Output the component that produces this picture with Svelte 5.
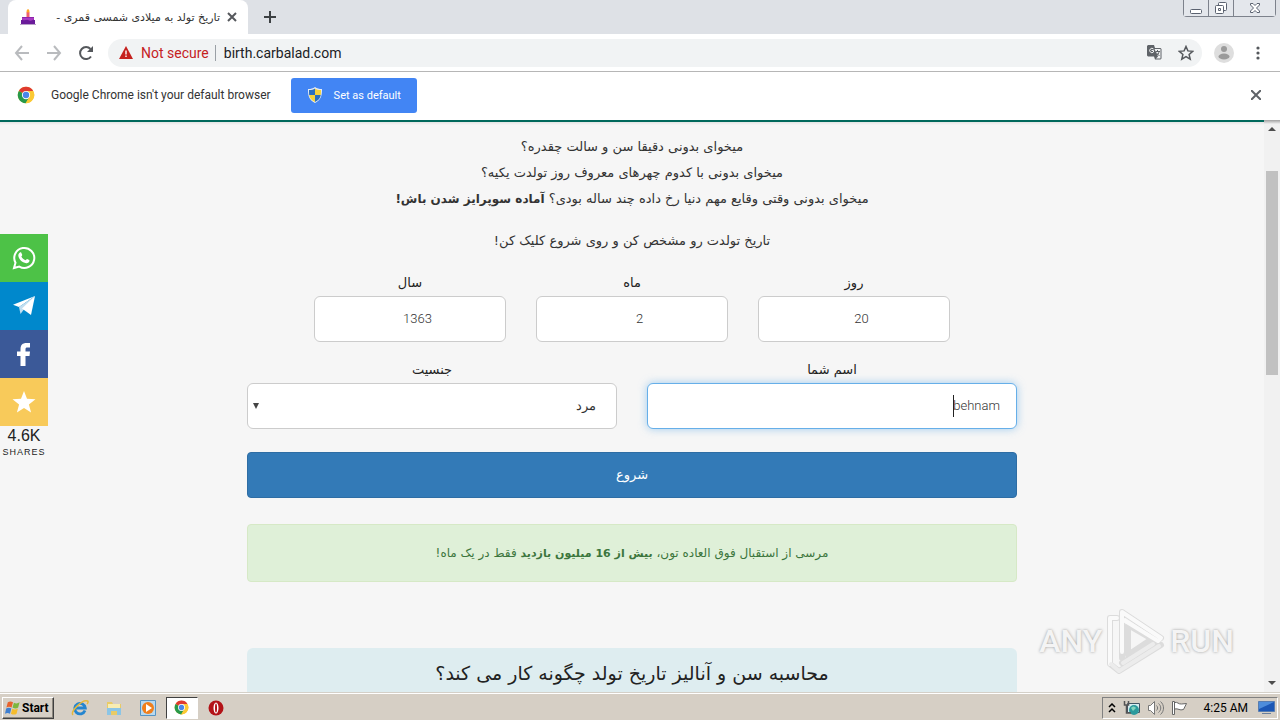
<script>
  let day = $state(20);
  let month = $state(2);
  let year = $state(1363);
  let name = $state('behnam');
  let gender = $state('male');
</script>

{#snippet chromeLogo(size)}
  <svg width={size} height={size} viewBox="0 0 48 48" aria-hidden="true">
    <circle cx="24" cy="24" r="22" fill="#fbc934" />
    <path d="M24 24 4.900 13a22 22 0 0 1 38.200 0z" fill="#df3a2f" />
    <path d="M4.900 13A22 22 0 0 0 23 46l10-17-9-5z" fill="#27994a" />
    <path d="M24 13h19.100A22 22 0 0 1 23 46l10.500-17z" fill="#fbc934" />
    <circle cx="24" cy="24" r="11" fill="#fff" />
    <circle cx="24" cy="24" r="8.500" fill="#4a86e8" />
  </svg>
{/snippet}

<div class="desktop">
  <header class="tab-strip">
    <div class="tab">
      <svg class="favicon" width="16" height="16" viewBox="0 0 16 16" aria-hidden="true">
        <path d="M6.500 3h3v6h-3z" fill="#f0616d" />
        <path d="M8 0c2 1.500 2 3.500 0 3.500S6 1.500 8 0z" fill="#ffa726" />
        <path d="M2 8h12v4H2z" fill="#8e24aa" />
        <path d="M1 11h14v4H1z" fill="#6a1b9a" />
        <path d="M2 10c2 3 4 0 6 1s4 1 6-1V9H2z" fill="#a93bc4" />
        <path d="M0 15h16v1H0z" fill="#b8a0c8" />
      </svg>
      <span class="tab-title" dir="rtl">تاریخ تولد به میلادی شمسی قمری -</span>
      <button class="icon-btn" aria-label="Close tab">
        <svg width="10" height="10" viewBox="0 0 10 10"><path d="m1 1 8 8M9 1 1 9" stroke="#55585c" stroke-width="2" /></svg>
      </button>
    </div>
    <button class="icon-btn new-tab" aria-label="New tab">
      <svg width="12" height="12" viewBox="0 0 12 12"><path d="M6 0v12M0 6h12" stroke="#3c4043" stroke-width="2" /></svg>
    </button>
    <div class="window-controls">
      <button aria-label="Minimize">
        <svg width="14" height="14" viewBox="0 0 14 14"><rect x="1.500" y="8.500" width="11" height="4" rx="1" fill="#fff" stroke="#5b6270" /></svg>
      </button>
      <button aria-label="Restore">
        <svg width="14" height="14" viewBox="0 0 14 14" fill="#fff" stroke="#5b6270"><rect x="4.500" y="1.500" width="8" height="8" rx="1" /><rect x="1.500" y="4.500" width="8" height="8" rx="1" /><path d="M4.500 7.500h2v2h-2z" /></svg>
      </button>
      <button class="wide" aria-label="Close window">
        <svg width="14" height="14" viewBox="0 0 14 14"><path d="M2.500 2.500h2.500l2 2 2-2h2.500v1.500L8.500 7l3 3v1.500H9l-2-2-2 2H2.500V10l3-3-3-3z" fill="#fff" stroke="#5b6270" /></svg>
      </button>
    </div>
  </header>

  <nav class="toolbar" aria-label="Browser">
    <button class="icon-btn" aria-label="Back">
      <svg width="16" height="16" viewBox="0 0 16 16" fill="none" stroke="#b9bbbe" stroke-width="2"><path d="M15 8H2M8 1 2 8l6 7" /></svg>
    </button>
    <button class="icon-btn" aria-label="Forward">
      <svg width="16" height="16" viewBox="0 0 16 16" fill="none" stroke="#b9bbbe" stroke-width="2"><path d="M1 8h13M8 1l6 7-6 7" /></svg>
    </button>
    <button class="icon-btn" aria-label="Reload">
      <svg width="16" height="16" viewBox="0 0 16 16"><path d="M13 11.500A6 6 0 1 1 12.500 4" fill="none" stroke="#55585c" stroke-width="2" /><path d="M15 1v6H9z" fill="#55585c" /></svg>
    </button>
    <div class="omnibox">
      <svg width="14" height="13" viewBox="0 0 14 13" aria-hidden="true"><path d="M7 0l7 13H0z" fill="#c5221f" /><path d="M6.300 4.500h1.400v4H6.300zM6.300 9.500h1.400V11H6.300z" fill="#fff" /></svg>
      <span class="not-secure">Not secure</span>
      <input class="url" aria-label="Address" value="birth.carbalad.com" />
      <button class="icon-btn" aria-label="Translate this page">
        <svg width="15" height="15" viewBox="0 0 15 15">
          <path d="M1 0h6l1 3h5.500l1 1v9.500l-1 1H8l-1-3H1l-1-1V1z" fill="#5f6368" />
          <path d="M7.500 4h6v9.500H9l2-2z" fill="#f1f3f4" />
          <path d="M6.500 4A2.200 2.200 0 1 0 6.500 7V5.500H4.500" fill="none" stroke="#f1f3f4" />
          <path d="M8.500 6.500H13M10.500 5v1.500M12 6.500c0 2-1.500 3.500-3 4M9 7.500l3.500 3.500" fill="none" stroke="#5f6368" />
        </svg>
      </button>
      <button class="icon-btn" aria-label="Bookmark this page">
        <svg width="16" height="16" viewBox="0 0 16 16"><path d="m8 1.500 1.900 4.400 4.800.4-3.600 3.200 1.100 4.700L8 11.700l-4.200 2.500 1.100-4.700L1.300 6.300l4.800-.4z" fill="none" stroke="#55585c" stroke-width="1.500" /></svg>
      </button>
    </div>
    <button class="icon-btn" aria-label="Profile">
      <svg width="20" height="20" viewBox="0 0 20 20"><circle cx="10" cy="10" r="10" fill="#dedede" /><circle cx="10" cy="6" r="3" fill="#9b9b9b" /><ellipse cx="10" cy="13.500" rx="5.500" ry="3" fill="#9b9b9b" /></svg>
    </button>
    <button class="icon-btn" aria-label="Menu">
      <svg width="16" height="16" viewBox="0 0 16 16" fill="#55585c"><circle cx="8" cy="3" r="1.600" /><circle cx="8" cy="8" r="1.600" /><circle cx="8" cy="13" r="1.600" /></svg>
    </button>
  </nav>

  <div class="infobar">
    {@render chromeLogo(18)}
    <span>Google Chrome isn't your default browser</span>
    <button class="default-btn">
      <svg width="14" height="16" viewBox="0 0 14 16" aria-hidden="true">
        <path d="M7 0c2 1.500 4 2 7 2 0 7-1 11-7 14C1 13 0 9 0 2c3 0 5-.5 7-2z" fill="#e8eef5" />
        <path d="M7 1.500V8H1.200C1 6 1 5 1 3c2.500 0 4.500-.5 6-1.500zM7 8h5.800c-.5 3-2 5-5.800 7z" fill="#2a6fc0" />
        <path d="M7 1.500V8h5.800c.2-2 .2-3 .2-5-2.500 0-4.500-.5-6-1.500zM7 8H1.200c.5 3 2 5 5.800 7z" fill="#f5d23c" />
      </svg>
      Set as default
    </button>
    <button class="icon-btn dismiss" aria-label="Dismiss">
      <svg width="10" height="10" viewBox="0 0 10 10"><path d="m0 0 10 10M10 0 0 10" stroke="#5f6368" stroke-width="2" /></svg>
    </button>
  </div>

  <div class="viewport">
    <main class="page" dir="rtl" lang="fa">
      <div class="container">
        <p>
          میخوای بدونی دقیقا سن و سالت چقدره؟<br />
          میخوای بدونی با کدوم چهرهای معروف روز تولدت یکیه؟<br />
          میخوای بدونی وقتی وقایع مهم دنیا رخ داده چند ساله بودی؟ <strong>آماده سوپرایز شدن باش!</strong>
        </p>
        <p>تاریخ تولدت رو مشخص کن و روی شروع کلیک کن!</p>

        <form onsubmit={(e) => e.preventDefault()}>
          <div class="row birth">
            <div class="field">
              <label for="day">روز</label>
              <input id="day" type="number" bind:value={day} />
            </div>
            <div class="field">
              <label for="month">ماه</label>
              <input id="month" type="number" bind:value={month} />
            </div>
            <div class="field">
              <label for="year">سال</label>
              <input id="year" type="number" bind:value={year} />
            </div>
          </div>
          <div class="row">
            <div class="field">
              <label for="name">اسم شما</label>
              <div class="name-box">
                <input id="name" class="focused" type="text" bind:value={name} />
                <span class="caret"></span>
              </div>
            </div>
            <div class="field">
              <label for="gender">جنسیت</label>
              <div class="select-box">
                <select id="gender" bind:value={gender}>
                  <option value="male">مرد</option>
                  <option value="female">زن</option>
                </select>
                <svg class="arrow" width="6" height="6" viewBox="0 0 6 6" aria-hidden="true"><path d="M0 0h6L3 6z" fill="#444" /></svg>
              </div>
            </div>
          </div>
          <button class="start-search" type="submit">شروع</button>
        </form>

        <div class="alert">
          مرسی از استقبال فوق العاده تون، <strong>بیش از 16 میلیون بازدید</strong> فقط در یک ماه!
        </div>

        <section class="about">
          <h2>محاسبه سن و آنالیز تاریخ تولد چگونه کار می کند؟</h2>
        </section>
      </div>
    </main>

    <div class="scrollbar">
      <svg width="8" height="4" viewBox="0 0 8 4"><path d="M0 4h8L4 0z" fill="#4d4d4d" /></svg>
      <div class="track"><div class="thumb"></div></div>
      <svg width="8" height="4" viewBox="0 0 8 4"><path d="M0 0h8L4 4z" fill="#4d4d4d" /></svg>
    </div>

    <aside class="share">
      <a class="whatsapp" href="#whatsapp" aria-label="WhatsApp">
        <svg width="24" height="24" viewBox="0 0 24 24">
          <path d="M2 22l1.500-5.300A10 10 0 1 1 7.300 20.600z" fill="none" stroke="#fff" stroke-width="2" />
          <path d="M8 6.500c.5-.3 1-.2 1.300.3l.9 2c.1.500-.8 1.400-.8 1.700.7 1.700 2.300 3 4 3.700.5 0 1.200-1.400 1.700-1.300l2.100 1c.5.300.3 1.300 0 1.900-.5 1-1.900 1.600-3 1.400C10 16.500 6.500 13 6.300 9.500c0-1.200.8-2.500 1.700-3z" fill="#fff" />
        </svg>
      </a>
      <a class="telegram" href="#telegram" aria-label="Telegram">
        <svg width="24" height="22" viewBox="0 0 24 22">
          <path d="M23 1 1 9.700l6 2.300z" fill="#fff" />
          <path d="M23 1 7 12l1.500 7 3-4z" fill="#c2dff0" />
          <path d="M23 1 10 13.500l9 6.500z" fill="#fff" />
        </svg>
      </a>
      <a class="facebook" href="#facebook" aria-label="Facebook">
        <svg width="14" height="23" viewBox="0 0 14 23"><path d="M3.500 23V13H0V8.500h3.500V6c0-4 2-6 6-6H13v4.500h-2.500c-1.700 0-2 .6-2 2v2H13l-.5 4.500h-4v10z" fill="#fff" /></svg>
      </a>
      <a class="favorites" href="#favorites" aria-label="Favorites">
        <svg width="24" height="22" viewBox="0 0 24 22"><path d="m12 0 3 7.800 8.500.4-6.600 5.200 2.200 8.100L12 17l-7.100 4.500 2.200-8.100L.5 8.200 9 7.800z" fill="#fff" /></svg>
      </a>
      <span class="count">4.6K</span>
      <span class="caption">SHARES</span>
    </aside>

    <div class="watermark">
      <span>ANY</span>
      <svg width="60" height="66" viewBox="0 0 60 66" fill="none" stroke-linejoin="round" stroke-linecap="round" aria-hidden="true">
        <g stroke="#dcdcdc" stroke-width="6"><path d="M16 50V4l39 26-39 25M11 10H4v46l9 7 42-26" /><path d="M22 17v30l24-16z" /></g>
        <g stroke="#fafafa" stroke-width="4"><path d="M16 44V4l39 26-3 3-36-22" /><path d="M11 10H4v46" /></g>
        <path d="M5 56l8 7 40-25M17 55l30-19" stroke="#ececec" stroke-width="4" />
      </svg>
      <span>RUN</span>
    </div>
  </div>

  <footer class="taskbar">
    <button class="start">
      <svg width="16" height="16" viewBox="0 0 17 16" aria-hidden="true">
        <path d="M3 2c2-1.500 4-1 5.500 0L7 7.500c-2-1-3.500-1-5.500 0z" fill="#e8622c" />
        <path d="M9.500 2.500c2 1 4 1 6-.5L14 7.500c-2 1.500-4 1-6 0z" fill="#7db63c" />
        <path d="M1.200 8.500c2-1.200 4-1 5.500 0L5.300 14c-1.800-1-3.300-1-5.300 0z" fill="#3f7fd0" />
        <path d="M7.700 8.800c2 1 4 1 6-.3L12.300 14c-2 1.500-4 1.200-6 0z" fill="#f5bc2c" />
      </svg>
      Start
    </button>
    <div class="quick-launch">
      <button aria-label="Internet Explorer">
        <svg width="18" height="18" viewBox="0 0 18 18" fill="none"><path d="M14 11.500A5.300 5.300 0 1 1 14.300 9H5" stroke="#2485cf" stroke-width="2.800" /><path d="M2 16C-1 13 11 0 16.500 2c1 .5.500 2-.5 3" stroke="#e5b83a" stroke-width="1.500" /></svg>
      </button>
      <button aria-label="Explorer">
        <svg width="18" height="18" viewBox="0 0 18 18"><path d="M2 3h5l1 2h8v11H2z" fill="#e9cb66" /><path d="M3 5h12v5H3z" fill="#f8edb2" /><path d="M2 9h14v7h-4v-4H6v4H2z" fill="#8bc5e6" /></svg>
      </button>
      <button aria-label="Media Player">
        <svg width="18" height="18" viewBox="0 0 18 18"><path d="M1.500 1.500h15v15h-15z" fill="#b8d9ef" stroke="#5594c4" /><circle cx="9" cy="9" r="6" fill="#f07f1c" /><path d="m7 5 6 4-6 4z" fill="#fff" /></svg>
      </button>
      <button class="active" aria-label="Chrome">{@render chromeLogo(15)}</button>
      <button aria-label="Opera">
        <svg width="18" height="18" viewBox="0 0 18 18"><circle cx="9" cy="9" r="7.500" fill="#b31217" /><ellipse cx="9" cy="9" rx="2.500" ry="5.500" fill="#fff" /><ellipse cx="9" cy="9" rx="1" ry="4.500" fill="#b31217" /></svg>
      </button>
    </div>
    <div class="tray">
      <svg width="8" height="10" viewBox="0 0 8 10" fill="none" stroke="#000" stroke-width="1.500"><path d="m1 4 3-3 3 3M1 9l3-3 3 3" /></svg>
      <svg width="17" height="16" viewBox="0 0 17 16"><path d="M4.500 3.500h12v9h-12z" fill="#d6eef0" stroke="#456" /><circle cx="11" cy="10" r="5" fill="#2c9a9d" /><path d="M8 8c2-2 3-2 5 0l-3 3z" fill="#86d4bd" /><path d="M1.500 1v4h4V1M3.500 5v8H8" fill="none" stroke="#555" stroke-width="1.500" /></svg>
      <svg width="17" height="16" viewBox="0 0 17 16" fill="none" stroke="#777"><path d="M1.500 5.500h2l4-4v13l-4-4h-2z" fill="#fff" /><path d="M9.500 5.500c1.500 1.500 1.500 3.500 0 5M11.500 3.500c3 2.500 3 6.500 0 9M13.500 1.500c4 3.500 4 9.500 0 13" /></svg>
      <svg width="17" height="16" viewBox="0 0 17 16" fill="#fff" stroke="#666"><path d="M3.500 2.500c3-1 4 2 7 1.500l5-.5-3 6c-4 1.500-5-1.500-9-.5z" /><path d="M1.500 1.500h2v13h-2z" /></svg>
      <span class="clock">4:25 AM</span>
      <svg width="17" height="15" viewBox="0 0 17 15"><path d="M.5 1.500h16v10H.5z" fill="#1c57b5" stroke="#587db0" /><path d="M1 2h15L1 9z" fill="#4e8ddb" /><path d="M4 13h9v1H4z" fill="#6a7f9b" /></svg>
    </div>
  </footer>
</div>

<style>
  :global(body) {
    margin: 0;
  }

  .desktop {
    display: flex;
    flex-direction: column;
    height: 100vh;
    position: relative;
    overflow: hidden;
    font-family: Roboto, 'DejaVu Sans', sans-serif;
    font-size: 12px;
    color: #333;
  }

  .desktop * {
    box-sizing: border-box;
  }

  button {
    font: inherit;
    cursor: pointer;
  }

  svg {
    display: block;
    flex-shrink: 0;
  }

  .icon-btn {
    background: none;
    border: none;
    padding: 0;
  }

  .tab-strip {
    display: flex;
    height: 34px;
    padding-left: 8px;
    background: #dee1e6;
  }

  .tab {
    display: flex;
    align-items: center;
    width: 240px;
    padding: 0 11px 0 12px;
    background: #fff;
    border-radius: 8px 8px 0 0;
  }

  .tab-title {
    flex: 1;
    margin: 0 7px 0 12px;
    font-family: 'DejaVu Sans', sans-serif;
    font-size: 11px;
    white-space: nowrap;
  }

  .new-tab {
    margin-left: 16px;
  }

  .window-controls {
    display: flex;
    height: 17px;
    margin: 0 4px 0 auto;
    border: 1px solid #7d828c;
    border-top: none;
    border-radius: 0 0 4px 4px;
  }

  .window-controls button {
    display: flex;
    align-items: center;
    justify-content: center;
    width: 25px;
    padding: 0;
    background: #e4e7ec;
    border: none;
    border-right: 1px solid #7d828c;
  }

  .window-controls .wide {
    width: 41px;
    border-right: none;
  }

  .toolbar {
    display: flex;
    align-items: center;
    gap: 16px;
    height: 38px;
    padding: 0 14px;
    border-bottom: 1px solid #b6b6b6;
    background: #fff;
  }

  .omnibox {
    display: flex;
    align-items: center;
    flex: 1;
    height: 28px;
    margin: 0 -4px 0 -2px;
    padding: 0 8px 0 11px;
    border-radius: 14px;
    background: #f1f3f4;
    font-size: 14px;
  }

  .not-secure {
    margin: 0 6px 0 8px;
    color: #c5221f;
  }

  .url {
    flex: 1;
    min-width: 0;
    height: 16px;
    padding: 0 0 0 8px;
    border: none;
    border-left: 1px solid #9aa0a6;
    background: none;
    font: inherit;
    color: #202124;
  }

  .omnibox .icon-btn {
    margin-left: 16px;
  }

  .infobar {
    display: flex;
    align-items: center;
    height: 48px;
    padding: 0 19px 2px 17px;
    background: #fff;
  }

  .infobar span {
    margin: 0 20px 0 16px;
  }

  .default-btn {
    display: flex;
    align-items: center;
    gap: 12px;
    height: 35px;
    padding: 0 16px 0 17px;
    border: none;
    border-radius: 3px;
    background: #4285f4;
    color: #fff;
    font-size: 11px;
  }

  .dismiss {
    margin-left: auto;
  }

  .viewport {
    display: flex;
    flex: 1;
    min-height: 0;
    position: relative;
  }

  .page {
    flex: 1;
    min-width: 0;
    overflow: hidden;
    border-top: 2px solid #00695c;
    background: #f6f6f6 linear-gradient(#e4e4e4, #f6f6f6) no-repeat top / 100% 3px;
    font-family: 'DejaVu Sans', sans-serif;
    font-size: 13px;
    line-height: 26px;
    text-align: center;
  }

  .container {
    max-width: 770px;
    margin: 0 auto;
    padding-top: 12px;
  }

  p {
    margin: 0 0 16px;
  }

  strong {
    line-height: 1;
  }

  p strong {
    font-size: 12px;
  }

  .row {
    display: flex;
    gap: 30px;
    margin-bottom: 15px;
  }

  .birth {
    padding: 0 67px;
  }

  .field {
    flex: 1;
    min-width: 0;
  }

  label {
    display: block;
    color: #222;
  }

  .field input,
  .field select {
    display: block;
    width: 100%;
    height: 46px;
    padding: 9px 16px 11px;
    border: 1px solid #ccc;
    border-radius: 6px;
    outline: none;
    background: #fff;
    color: #333;
    font-family: Roboto, 'DejaVu Sans', sans-serif;
    font-size: 13px;
    font-weight: 300;
    appearance: none;
  }

  .field input[type='number'] {
    text-align: center;
  }

  .name-box,
  .select-box {
    position: relative;
  }

  .field .focused {
    border-color: #66afe9;
    box-shadow: 0 0 8px rgba(102, 175, 233, 0.6);
  }

  .caret {
    position: absolute;
    top: 12px;
    right: 63px;
    width: 1px;
    height: 22px;
    background: #222;
  }

  .field select {
    padding-right: 20px;
  }

  .arrow {
    position: absolute;
    top: 20px;
    left: 6px;
  }

  .start-search {
    display: block;
    width: 100%;
    height: 46px;
    margin-top: 23px;
    border: 1px solid #2e6da4;
    border-radius: 4px;
    background: #337ab7;
    color: #fff;
  }

  .alert {
    margin-top: 26px;
    padding: 15px;
    border: 1px solid #d6e9c6;
    border-radius: 4px;
    background: #dff0d8;
    color: #3c763d;
    font-size: 12px;
  }

  .alert strong {
    font-size: 11px;
  }

  .about {
    height: 120px;
    margin-top: 66px;
    padding: 9px;
    border-radius: 6px;
    background: #deedf0;
  }

  h2 {
    margin: 0;
    font-size: 19px;
    font-weight: 500;
    line-height: 32px;
    color: #222;
  }

  .scrollbar {
    display: flex;
    flex-direction: column;
    align-items: center;
    width: 16px;
    padding: 7px 0;
    background: #f1f1f1 linear-gradient(#a0a0a0, #f1f1f1) no-repeat top / 100% 4px;
  }

  .track {
    flex: 1;
    width: 12px;
    padding-top: 40px;
  }

  .thumb {
    height: 40%;
    background: #c1c1c1;
  }

  .share {
    display: flex;
    flex-direction: column;
    position: absolute;
    top: 114px;
    left: 0;
    width: 48px;
    font-family: 'Liberation Sans', sans-serif;
    text-align: center;
    color: #222;
  }

  .share a {
    display: flex;
    align-items: center;
    justify-content: center;
    height: 48px;
  }

  .whatsapp {
    background: #4dc247;
  }

  .telegram {
    background: #0088cc;
  }

  .facebook {
    background: #3b5998;
  }

  .favorites {
    background: #f8ca5a;
  }

  .count {
    font-size: 16px;
    line-height: 20px;
  }

  .caption {
    font-size: 9px;
    line-height: 12px;
    letter-spacing: 1px;
  }

  .watermark {
    display: flex;
    align-items: center;
    gap: 4px;
    position: absolute;
    right: 46px;
    bottom: 18px;
    font-size: 32px;
    font-weight: 500;
    color: #f4f4f4;
    text-shadow: 0 0 3px #999;
    pointer-events: none;
  }

  .taskbar {
    display: flex;
    align-items: center;
    height: 28px;
    padding: 2px 2px 0;
    border-top: 1px solid #d4d0c8;
    background: #d6cfc5;
    box-shadow: inset 0 1px #fff;
    color: #000;
  }

  .start {
    display: flex;
    align-items: center;
    gap: 1px;
    height: 22px;
    padding: 0 4px 0 2px;
    border: 1px solid;
    border-color: #fff #404040 #404040 #fff;
    background: #d6cfc5;
    box-shadow: inset -1px -1px #8c877e;
    font-weight: 700;
  }

  .quick-launch {
    display: flex;
    align-items: center;
    gap: 2px;
    margin-left: 10px;
  }

  .quick-launch button {
    display: flex;
    align-items: center;
    justify-content: center;
    width: 32px;
    height: 22px;
    padding: 0;
    border: none;
    background: none;
  }

  .quick-launch .active {
    border: 1px solid;
    border-color: #404040 #fff #fff #404040;
    background: #fff;
  }

  .tray {
    display: flex;
    align-items: center;
    gap: 7px;
    height: 22px;
    margin-left: auto;
    padding: 0 2px 0 5px;
    border: 1px solid;
    border-color: #808080 #fff #fff #808080;
  }

  .clock {
    margin: 0 3px 0 9px;
  }
</style>
